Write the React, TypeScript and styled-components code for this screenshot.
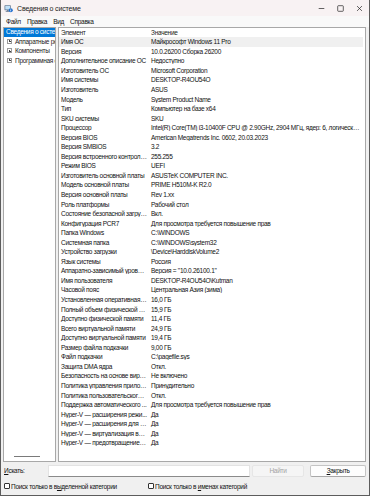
import styled, { createGlobalStyle } from "styled-components";

const GlobalStyle = createGlobalStyle`
    html, body {
        margin: 0;
        padding: 0;
        background: #f0f0f0;
    }
    * {
        box-sizing: border-box;
    }
`

const rows: [string, string][] = [
    ["Имя ОС", "Майкрософт Windows 11 Pro"],
    ["Версия", "10.0.26200 Сборка 26200"],
    ["Дополнительное описание ОС", "Недоступно"],
    ["Изготовитель ОС", "Microsoft Corporation"],
    ["Имя системы", "DESKTOP-R4OU54O"],
    ["Изготовитель", "ASUS"],
    ["Модель", "System Product Name"],
    ["Тип", "Компьютер на базе x64"],
    ["SKU системы", "SKU"],
    ["Процессор", "Intel(R) Core(TM) i3-10400F CPU @ 2.90GHz, 2904 МГц, ядер: 6, логических процессоров: 12"],
    ["Версия BIOS", "American Megatrends Inc. 0602, 20.03.2023"],
    ["Версия SMBIOS", "3.2"],
    ["Версия встроенного контролл...", "255.255"],
    ["Режим BIOS", "UEFI"],
    ["Изготовитель основной платы", "ASUSTeK COMPUTER INC."],
    ["Модель основной платы", "PRIME H510M-K R2.0"],
    ["Версия основной платы", "Rev 1.xx"],
    ["Роль платформы", "Рабочий стол"],
    ["Состояние безопасной загруз...", "Вкл."],
    ["Конфигурация PCR7", "Для просмотра требуется повышение прав"],
    ["Папка Windows", "C:\\WINDOWS"],
    ["Системная папка", "C:\\WINDOWS\\system32"],
    ["Устройство загрузки", "\\Device\\HarddiskVolume2"],
    ["Язык системы", "Россия"],
    ["Аппаратно-зависимый уровен...", "Версия = \"10.0.26100.1\""],
    ["Имя пользователя", "DESKTOP-R4OU54O\\Kutman"],
    ["Часовой пояс", "Центральная Азия (зима)"],
    ["Установленная оперативная п...", "16,0 ГБ"],
    ["Полный объем физической па...", "15,9 ГБ"],
    ["Доступно физической памяти", "11,4 ГБ"],
    ["Всего виртуальной памяти", "24,9 ГБ"],
    ["Доступно виртуальной памяти", "19,4 ГБ"],
    ["Размер файла подкачки", "9,00 ГБ"],
    ["Файл подкачки", "C:\\pagefile.sys"],
    ["Защита DMA ядра", "Откл."],
    ["Безопасность на основе вирту...", "Не включено"],
    ["Политика управления прилож...", "Принудительно"],
    ["Политика пользовательского ...", "Откл."],
    ["Поддержка автоматического ...", "Для просмотра требуется повышение прав"],
    ["Hyper-V — расширения режи...", "Да"],
    ["Hyper-V — расширения для п...", "Да"],
    ["Hyper-V — виртуализация вкл...", "Да"],
    ["Hyper-V — предотвращение в...", "Да"],
]

const treeItems = ["Аппаратные ресурсы", "Компоненты", "Программная среда"]

const AppIcon = () => (
    <svg width="9" height="9" viewBox="0 0 16 16">
        <rect x="1" y="2" width="11" height="9" rx="1" fill="#5a6d86"/>
        <rect x="2.2" y="3.2" width="8.6" height="6.6" fill="#bfe0f7"/>
        <rect x="5" y="11" width="3" height="2" fill="#5a6d86"/>
        <rect x="3" y="13" width="7" height="1.2" fill="#5a6d86"/>
        <circle cx="12" cy="11" r="3.6" fill="#1f6fd0"/>
        <rect x="11.4" y="10.2" width="1.2" height="3" fill="#fff"/>
        <rect x="11.4" y="8.4" width="1.2" height="1.1" fill="#fff"/>
    </svg>
)

export default function App() {
    return (
        <>
            <GlobalStyle/>
            <Window>
                <TitleBar>
                    <TitleLeft>
                        <AppIcon/>
                        <TitleText>Сведения о системе</TitleText>
                    </TitleLeft>
                    <Controls>
                        <CtrlButton>
                            <svg width="7" height="7" viewBox="0 0 10 10">
                                <line x1="1" y1="5" x2="9" y2="5" stroke="#222" strokeWidth="1"/>
                            </svg>
                        </CtrlButton>
                        <CtrlButton>
                            <svg width="7" height="7" viewBox="0 0 10 10">
                                <rect x="1" y="1" width="8" height="8" rx="1" fill="none" stroke="#222" strokeWidth="1"/>
                            </svg>
                        </CtrlButton>
                        <CtrlButton>
                            <svg width="7" height="7" viewBox="0 0 10 10">
                                <path d="M1.5 1.5 L8.5 8.5 M8.5 1.5 L1.5 8.5" stroke="#222" strokeWidth="1"/>
                            </svg>
                        </CtrlButton>
                    </Controls>
                </TitleBar>
                <MenuBar>
                    <MenuItem>Файл</MenuItem>
                    <MenuItem>Правка</MenuItem>
                    <MenuItem>Вид</MenuItem>
                    <MenuItem>Справка</MenuItem>
                </MenuBar>
                <Body>
                    <TreePanel>
                        <TreeList>
                            <TreeRoot>Сведения о системе</TreeRoot>
                            {treeItems.map(t => (
                                <TreeRow key={t}>
                                    <Expander/>
                                    <TreeLabel>{t}</TreeLabel>
                                </TreeRow>
                            ))}
                        </TreeList>
                        <HScroll>
                            <HThumb/>
                        </HScroll>
                    </TreePanel>
                    <ListPanel>
                        <HeaderRow>
                            <NameCell>Элемент</NameCell>
                            <ValueCell>Значение</ValueCell>
                        </HeaderRow>
                        {rows.map(([name, value], i) => (
                            <DataRow key={i} $selected={i === 0}>
                                <NameCell>{name}</NameCell>
                                <ValueCell>{value}</ValueCell>
                            </DataRow>
                        ))}
                    </ListPanel>
                </Body>
                <SearchRow>
                    <SearchLabel><u>И</u>скать:</SearchLabel>
                    <SearchInput/>
                    <Button $disabled>Найти</Button>
                    <Button $primary><u>З</u>акрыть</Button>
                </SearchRow>
                <CheckRow>
                    <Check>
                        <Box/>
                        <span>Поиск только в в<u>ы</u>деленной категории</span>
                    </Check>
                    <Check>
                        <Box/>
                        <span>Поиск только в <u>и</u>менах категорий</span>
                    </Check>
                </CheckRow>
            </Window>
        </>
    )
}

const Window = styled.div`
    width: 370px;
    height: 496px;
    display: flex;
    flex-direction: column;
    background: #f0f0f0;
    border: 1px solid #5c5c5c;
    border-top: none;
    font-family: "Liberation Sans", Arial, sans-serif;
    font-size: 6.5px;
    letter-spacing: -0.28px;
    color: #111;
    overflow: hidden;
`

const TitleBar = styled.div`
    height: 16px;
    flex: none;
    display: flex;
    align-items: center;
    justify-content: space-between;
    background: #f8f2f3;
    padding-left: 3px;
`

const TitleLeft = styled.div`
    display: flex;
    align-items: center;
    gap: 4px;
`

const TitleText = styled.span`
    font-size: 7px;
    letter-spacing: -0.15px;
    color: #1a1a1a;
`

const Controls = styled.div`
    display: flex;
    height: 100%;
`

const CtrlButton = styled.div`
    width: 19px;
    height: 100%;
    display: flex;
    align-items: center;
    justify-content: center;
`

const MenuBar = styled.div`
    height: 11px;
    flex: none;
    display: flex;
    align-items: center;
    padding-left: 2px;
    background: #f9f9f9;
`

const MenuItem = styled.span`
    padding: 0 3px;
`

const Body = styled.div`
    flex: 1;
    min-height: 0;
    display: flex;
    gap: 2px;
    padding: 0 3px 0 2px;
`

const TreePanel = styled.div`
    width: 53px;
    flex: none;
    display: flex;
    flex-direction: column;
    background: #fff;
    border: 1px solid #a8a8a8;
    overflow: hidden;
`

const TreeList = styled.div`
    flex: 1;
    display: flex;
    flex-direction: column;
    overflow: hidden;
`

const TreeRoot = styled.div`
    height: 8.5px;
    line-height: 8.5px;
    padding-left: 2px;
    background: #0078d7;
    color: #fff;
    white-space: nowrap;
    overflow: hidden;
`

const TreeRow = styled.div`
    height: 9.6px;
    display: flex;
    align-items: center;
    gap: 3px;
    padding-left: 3px;
    white-space: nowrap;
    overflow: hidden;
    &:first-of-type {
        margin-top: 1px;
    }
`

const Expander = styled.span`
    width: 5px;
    height: 5px;
    flex: none;
    border: 1px solid #9a9a9a;
    position: relative;
    background: #fff;

    &::before {
        content: '';
        position: absolute;
        left: 0.5px;
        right: 0.5px;
        top: 1.25px;
        height: 0.6px;
        background: #444;
    }

    &::after {
        content: '';
        position: absolute;
        top: 0.5px;
        bottom: 0.5px;
        left: 1.25px;
        width: 0.6px;
        background: #444;
    }
`

const TreeLabel = styled.span`
    color: #222;
`

const HScroll = styled.div`
    height: 9px;
    flex: none;
    display: flex;
    align-items: center;
    padding-left: 10px;
`

const HThumb = styled.div`
    width: 26px;
    height: 1px;
    background: #7a7a7a;
`

const ListPanel = styled.div`
    flex: 1;
    min-width: 0;
    background: #fff;
    border: 1px solid #a8a8a8;
    overflow: hidden;
`

const HeaderRow = styled.div`
    height: 9px;
    display: flex;
    align-items: center;
    color: #222;
`

const DataRow = styled.div<{ $selected?: boolean }>`
    height: 9.55px;
    display: flex;
    align-items: center;
    background: ${p => p.$selected ? "#f0f0f0" : "transparent"};
    margin-right: 2px;
`

const NameCell = styled.div`
    width: 89px;
    flex: none;
    padding-left: 2px;
    padding-right: 1px;
    white-space: nowrap;
    overflow: hidden;
    text-overflow: ellipsis;
`

const ValueCell = styled.div`
    flex: 1;
    min-width: 0;
    padding-left: 3px;
    padding-right: 3px;
    white-space: nowrap;
    overflow: hidden;
    text-overflow: ellipsis;
`

const SearchRow = styled.div`
    height: 17px;
    flex: none;
    display: flex;
    align-items: center;
    padding: 0 3px;
`

const SearchLabel = styled.span`
    width: 44px;
    flex: none;
`

const SearchInput = styled.div`
    width: 203px;
    height: 12px;
    background: #fff;
    border: 1px solid #e3e3e3;
    border-bottom: 1px solid #8a8a8a;
    margin-right: 2px;
`

const Button = styled.div<{ $disabled?: boolean; $primary?: boolean }>`
    height: 12px;
    width: ${p => p.$primary ? "56px" : "53px"};
    margin-left: ${p => p.$primary ? "6px" : "0"};
    display: flex;
    align-items: center;
    justify-content: center;
    background: ${p => p.$disabled ? "#f5f5f5" : "#fdfdfd"};
    border: 1px solid ${p => p.$disabled ? "#e6e6e6" : "#c4c4c4"};
    border-bottom-color: ${p => p.$disabled ? "#e6e6e6" : "#a8a8a8"};
    border-radius: 2px;
    color: ${p => p.$disabled ? "#a3a3a3" : "#111"};
`

const CheckRow = styled.div`
    height: 16px;
    flex: none;
    display: flex;
    align-items: center;
    padding-left: 3px;
    padding-bottom: 2px;
`

const Check = styled.div`
    width: 144px;
    display: flex;
    align-items: center;
    gap: 1px;
    white-space: nowrap;
    &:last-child {
        width: auto;
    }
`

const Box = styled.span`
    width: 6px;
    height: 6px;
    flex: none;
    border: 1px solid #333;
    border-radius: 1px;
    background: #fff;
`
